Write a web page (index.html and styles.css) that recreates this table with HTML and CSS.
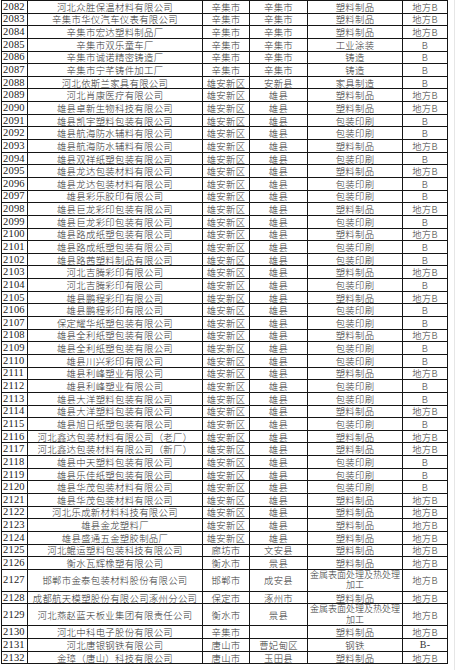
FILE: index.html
```html
<!DOCTYPE html>
<html lang="zh-CN">
<head>
<meta charset="utf-8">
<title>企业名单</title>
<link rel="stylesheet" href="styles.css">
</head>
<body>
<div class="page">
<table class="list">
<colgroup><col class="c-no"><col class="c-name"><col class="c-city"><col class="c-county"><col class="c-ind"><col class="c-lvl"></colgroup>
<tbody>
<tr><td class="no">2082</td><td>河北众胜保温材料有限公司</td><td>辛集市</td><td>辛集市</td><td>塑料制品</td><td>地方B</td></tr>
<tr><td class="no">2083</td><td>辛集市华仪汽车仪表有限公司</td><td>辛集市</td><td>辛集市</td><td>塑料制品</td><td>地方B</td></tr>
<tr><td class="no">2084</td><td>辛集市宏达塑料制品厂</td><td>辛集市</td><td>辛集市</td><td>塑料制品</td><td>地方B</td></tr>
<tr><td class="no">2085</td><td>辛集市双乐童车厂</td><td>辛集市</td><td>辛集市</td><td>工业涂装</td><td>B</td></tr>
<tr><td class="no">2086</td><td>辛集市诚诺精密铸造厂</td><td>辛集市</td><td>辛集市</td><td>铸造</td><td>B</td></tr>
<tr><td class="no">2087</td><td>辛集市宁芊铸件加工厂</td><td>辛集市</td><td>辛集市</td><td>铸造</td><td>B</td></tr>
<tr><td class="no">2088</td><td>河北依斯兰家具有限公司</td><td>雄安新区</td><td>安新县</td><td>家具制造</td><td>B</td></tr>
<tr><td class="no">2089</td><td>河北肖康医疗有限公司</td><td>雄安新区</td><td>雄县</td><td>塑料制品</td><td>地方B</td></tr>
<tr><td class="no">2090</td><td>雄县卓新生物科技有限公司</td><td>雄安新区</td><td>雄县</td><td>塑料制品</td><td>地方B</td></tr>
<tr><td class="no">2091</td><td>雄县凯宇塑料包装有限公司</td><td>雄安新区</td><td>雄县</td><td>包装印刷</td><td>B</td></tr>
<tr><td class="no">2092</td><td>雄县航海防水辅料有限公司</td><td>雄安新区</td><td>雄县</td><td>包装印刷</td><td>B</td></tr>
<tr><td class="no">2093</td><td>雄县航海防水辅料有限公司</td><td>雄安新区</td><td>雄县</td><td>塑料制品</td><td>地方B</td></tr>
<tr><td class="no">2094</td><td>雄县双祥纸塑包装有限公司</td><td>雄安新区</td><td>雄县</td><td>包装印刷</td><td>B</td></tr>
<tr><td class="no">2095</td><td>雄县龙达包装材料有限公司</td><td>雄安新区</td><td>雄县</td><td>塑料制品</td><td>地方B</td></tr>
<tr><td class="no">2096</td><td>雄县龙达包装材料有限公司</td><td>雄安新区</td><td>雄县</td><td>包装印刷</td><td>B</td></tr>
<tr><td class="no">2097</td><td>雄县彩乐胶印有限公司</td><td>雄安新区</td><td>雄县</td><td>包装印刷</td><td>B</td></tr>
<tr><td class="no">2098</td><td>雄县巨龙彩印包装有限公司</td><td>雄安新区</td><td>雄县</td><td>塑料制品</td><td>地方B</td></tr>
<tr><td class="no">2099</td><td>雄县巨龙彩印包装有限公司</td><td>雄安新区</td><td>雄县</td><td>包装印刷</td><td>B</td></tr>
<tr><td class="no">2100</td><td>雄县路成纸塑包装有限公司</td><td>雄安新区</td><td>雄县</td><td>塑料制品</td><td>地方B</td></tr>
<tr><td class="no">2101</td><td>雄县路成纸塑包装有限公司</td><td>雄安新区</td><td>雄县</td><td>包装印刷</td><td>B</td></tr>
<tr><td class="no">2102</td><td>雄县路茜塑料制品有限公司</td><td>雄安新区</td><td>雄县</td><td>包装印刷</td><td>B</td></tr>
<tr><td class="no">2103</td><td>河北吉腾彩印有限公司</td><td>雄安新区</td><td>雄县</td><td>塑料制品</td><td>地方B</td></tr>
<tr><td class="no">2104</td><td>河北吉腾彩印有限公司</td><td>雄安新区</td><td>雄县</td><td>包装印刷</td><td>B</td></tr>
<tr><td class="no">2105</td><td>雄县鹏程彩印有限公司</td><td>雄安新区</td><td>雄县</td><td>塑料制品</td><td>地方B</td></tr>
<tr><td class="no">2106</td><td>雄县鹏程彩印有限公司</td><td>雄安新区</td><td>雄县</td><td>包装印刷</td><td>B</td></tr>
<tr><td class="no">2107</td><td>保定耀华纸塑包装有限公司</td><td>雄安新区</td><td>雄县</td><td>包装印刷</td><td>B</td></tr>
<tr><td class="no">2108</td><td>雄县全利纸塑包装有限公司</td><td>雄安新区</td><td>雄县</td><td>塑料制品</td><td>地方B</td></tr>
<tr><td class="no">2109</td><td>雄县全利纸塑包装有限公司</td><td>雄安新区</td><td>雄县</td><td>包装印刷</td><td>B</td></tr>
<tr><td class="no">2110</td><td>雄县川兴彩印有限公司</td><td>雄安新区</td><td>雄县</td><td>包装印刷</td><td>B</td></tr>
<tr><td class="no">2111</td><td>雄县利峰塑业有限公司</td><td>雄安新区</td><td>雄县</td><td>塑料制品</td><td>地方B</td></tr>
<tr><td class="no">2112</td><td>雄县利峰塑业有限公司</td><td>雄安新区</td><td>雄县</td><td>包装印刷</td><td>B</td></tr>
<tr><td class="no">2113</td><td>雄县大洋塑料包装有限公司</td><td>雄安新区</td><td>雄县</td><td>包装印刷</td><td>B</td></tr>
<tr><td class="no">2114</td><td>雄县大洋塑料包装有限公司</td><td>雄安新区</td><td>雄县</td><td>塑料制品</td><td>地方B</td></tr>
<tr><td class="no">2115</td><td>雄县旭日纸塑包装有限公司</td><td>雄安新区</td><td>雄县</td><td>包装印刷</td><td>B</td></tr>
<tr><td class="no">2116</td><td>河北鑫达包装材料有限公司（老厂）</td><td>雄安新区</td><td>雄县</td><td>塑料制品</td><td>地方B</td></tr>
<tr><td class="no">2117</td><td>河北鑫达包装材料有限公司（新厂）</td><td>雄安新区</td><td>雄县</td><td>塑料制品</td><td>地方B</td></tr>
<tr><td class="no">2118</td><td>雄县中天塑料包装有限公司</td><td>雄安新区</td><td>雄县</td><td>包装印刷</td><td>B</td></tr>
<tr><td class="no">2119</td><td>雄县乐佳纸塑包装有限公司</td><td>雄安新区</td><td>雄县</td><td>包装印刷</td><td>B</td></tr>
<tr><td class="no">2120</td><td>雄县华茂包装材料有限公司</td><td>雄安新区</td><td>雄县</td><td>包装印刷</td><td>B</td></tr>
<tr><td class="no">2121</td><td>雄县华茂包装材料有限公司</td><td>雄安新区</td><td>雄县</td><td>塑料制品</td><td>地方B</td></tr>
<tr><td class="no">2122</td><td>河北乐成新材料科技有限公司</td><td>雄安新区</td><td>雄县</td><td>塑料制品</td><td>地方B</td></tr>
<tr><td class="no">2123</td><td>雄县金龙塑料厂</td><td>雄安新区</td><td>雄县</td><td>塑料制品</td><td>地方B</td></tr>
<tr><td class="no">2124</td><td>雄县盛通五金塑胶制品厂</td><td>雄安新区</td><td>雄县</td><td>塑料制品</td><td>地方B</td></tr>
<tr><td class="no">2125</td><td>河北鲲运塑料包装科技有限公司</td><td>廊坊市</td><td>文安县</td><td>塑料制品</td><td>地方B</td></tr>
<tr><td class="no">2126</td><td>衡水瓦辉橡塑有限公司</td><td>衡水市</td><td>景县</td><td>塑料制品</td><td>地方B</td></tr>
<tr class="tall"><td class="no">2127</td><td>邯郸市金泰包装材料股份有限公司</td><td>邯郸市</td><td>成安县</td><td class="wrap"><div class="clip">金属表面处理及热处理加工</div></td><td>地方B</td></tr>
<tr><td class="no">2128</td><td>成都航天模塑股份有限公司涿州分公司</td><td>保定市</td><td>涿州市</td><td>塑料制品</td><td>地方B</td></tr>
<tr class="tall"><td class="no">2129</td><td>河北燕赵蓝天板业集团有限责任公司</td><td>衡水市</td><td>景县</td><td class="wrap"><div class="clip">金属表面处理及热处理加工</div></td><td>地方B</td></tr>
<tr><td class="no">2130</td><td>河北中科电子股份有限公司</td><td>辛集市</td><td></td><td>塑料制品</td><td>地方B</td></tr>
<tr><td class="no">2131</td><td>河北唐银钢铁有限公司</td><td>唐山市</td><td>曹妃甸区</td><td>钢铁</td><td class="lat">B-</td></tr>
<tr><td class="no">2132</td><td>金璋（唐山）科技有限公司</td><td>唐山市</td><td>玉田县</td><td>塑料制品</td><td>地方B</td></tr>
</tbody>
</table>
</div>
</body>
</html>
```

FILE: styles.css
```css
html, body {
  margin: 0;
  padding: 0;
  background: #ffffff;
}

body {
  font-family: "Noto Sans CJK SC", "Liberation Serif", serif;
  color: #333333;
}

.page {
  box-sizing: border-box;
  width: 455px;
  min-height: 670px;
  padding-left: 1px;
  border-right: 1px solid #e6e6e6;
}

.list {
  border-collapse: collapse;
  table-layout: fixed;
  width: 446px;
}

.c-no { width: 26px; }
.c-name { width: 175px; }
.c-city { width: 47px; }
.c-county { width: 58px; }
.c-ind { width: 95px; }
.c-lvl { width: 45px; }

.list tr {
  height: 12.65px;
}

.list tr.tall {
  height: 22px;
}

.list td {
  border: 1px solid #151515;
  padding: 0;
  font-size: 9.4px;
  font-weight: 300;
  letter-spacing: 0.3px;
  line-height: 10px;
  text-align: center;
  vertical-align: middle;
  white-space: nowrap;
  overflow: hidden;
}

.list td.no {
  font-family: "Liberation Serif", serif;
  font-size: 10.5px;
  font-weight: 400;
  letter-spacing: 0.2px;
  text-align: left;
  padding-left: 1px;
  color: #222222;
}

.list td.lat {
  font-family: "Liberation Serif", serif;
  font-weight: 400;
  font-size: 10px;
}

.list td.wrap {
  vertical-align: top;
  white-space: normal;
}

.clip {
  height: 21px;
  overflow: hidden;
  font-size: 9px;
  letter-spacing: 0;
  line-height: 10.5px;
  padding: 0 1px;
}
```
